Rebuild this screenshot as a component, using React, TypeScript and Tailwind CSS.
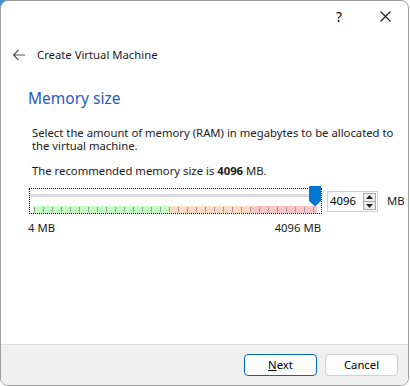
import React from 'react';

const font = { fontFamily: '"Noto Sans", "Liberation Sans", sans-serif' };

const TickBar = () => {
  const ticks = Array.from({ length: 32 }, (_, i) => 1 + i * 9);
  return (
    <svg width="284" height="7" viewBox="0 0 284 7" className="block">
      <rect x="0" y="0" width="137" height="7" fill="#c3ffc3" />
      <rect x="137" y="0" width="81" height="7" fill="#ffd9c2" />
      <rect x="218" y="0" width="66" height="7" fill="#ffc4c4" />
      {ticks.map((x) => (
        <rect key={x} x={x} y="1" width="1" height="5" fill="#9a9a9a" />
      ))}
    </svg>
  );
};

const App = () => {
  return (
    <div className="w-[410px] h-[386px] bg-white relative overflow-hidden" style={font}>
      <div className="absolute left-0 top-0 w-[12px] h-[12px] bg-[#3d8fd6]" />
      <div className="relative w-[409px] h-[386px] bg-white border border-[#9c9c9c] rounded-[8px] flex flex-col overflow-hidden">
        {/* title bar */}
        <div className="h-[30px] flex justify-end items-center">
          <div className="w-[46px] h-[30px] flex items-center justify-center text-[14px] text-black">?</div>
          <div className="w-[46px] h-[30px] flex items-center justify-center">
            <svg width="11" height="11" viewBox="0 0 11 11">
              <path d="M0.5 0.5 L10.5 10.5 M10.5 0.5 L0.5 10.5" stroke="#1a1a1a" strokeWidth="1.1" />
            </svg>
          </div>
        </div>

        {/* header */}
        <div className="h-[48px] flex items-center">
          <div className="w-[36px] flex justify-center">
            <svg width="14" height="12" viewBox="0 0 14 12">
              <path d="M13 6 H1.5 M6.5 1 L1.5 6 L6.5 11" fill="none" stroke="#555" strokeWidth="1.2" />
            </svg>
          </div>
          <span className="text-[11.3px] text-[#1b1b1b]">Create Virtual Machine</span>
        </div>

        {/* content */}
        <div className="flex-1 flex flex-col pl-[27px]">
          <h1 className="text-[15.5px] text-[#1f5cc0] leading-[20px] mt-[9px]">Memory size</h1>
          <div className="pl-[4px] mt-[18px] text-[11.3px] leading-[13px] text-[#1b1b1b] w-[372px]">
            Select the amount of memory (RAM) in megabytes to be allocated to the virtual machine.
          </div>
          <div className="pl-[4px] mt-[12px] text-[11.3px] leading-[13px] text-[#1b1b1b]">
            The recommended memory size is <b>4096</b> MB.
          </div>

          <div className="flex items-center mt-[11px] pl-[1px]">
            <div className="relative w-[293px] h-[26px] border border-dotted border-black">
              <div className="mt-[5px] h-[3px] bg-[#e3e3e3] border-y border-[#d6d6d6]" />
              <div className="absolute left-[3px] top-[17px]">
                <TickBar />
              </div>
              <svg className="absolute left-[279px] top-[-3px]" width="12" height="21" viewBox="0 0 12 21">
                <path d="M1 0 H11 Q12 0 12 1 V15 L6 20.5 L0 15 V1 Q0 0 1 0 Z" fill="#0078d4" />
              </svg>
            </div>
            <div className="ml-[5px] w-[51px] h-[21px] border border-[#cfcfcf] flex items-center justify-between bg-white">
              <span className="text-[11.3px] text-black pl-[2px]">4096</span>
              <div className="w-[13px] h-[17px] mr-[1px] border border-[#a8a8a8] bg-[#f0f0f0] flex flex-col items-center justify-around">
                <svg width="7" height="4" viewBox="0 0 7 4"><path d="M0 4 L3.5 0 L7 4 Z" fill="#222" /></svg>
                <div className="w-[11px] h-px bg-[#a8a8a8]" />
                <svg width="7" height="4" viewBox="0 0 7 4"><path d="M0 0 L3.5 4 L7 0 Z" fill="#222" /></svg>
              </div>
            </div>
            <span className="ml-[9px] text-[11.3px] text-[#1b1b1b]">MB</span>
          </div>

          <div className="w-[293px] flex justify-between mt-[7px] text-[11.3px] text-[#1b1b1b] leading-[14px]">
            <span>4 MB</span>
            <span>4096 MB</span>
          </div>
        </div>

        {/* footer */}
        <div className="h-[41px] border-t border-[#dcdcdc] bg-[#f0f0f0] flex items-center justify-end gap-[8px] pr-[10px]">
          <button className="w-[73px] h-[22px] rounded-[4px] border border-[#0067c0] bg-[#fdfdfd] text-[11.3px] text-black">
            <u>N</u>ext
          </button>
          <button className="w-[73px] h-[22px] rounded-[4px] border border-[#d0d0d0] bg-[#fdfdfd] text-[11.3px] text-black">
            Cancel
          </button>
        </div>
      </div>
    </div>
  );
};

export default App;
